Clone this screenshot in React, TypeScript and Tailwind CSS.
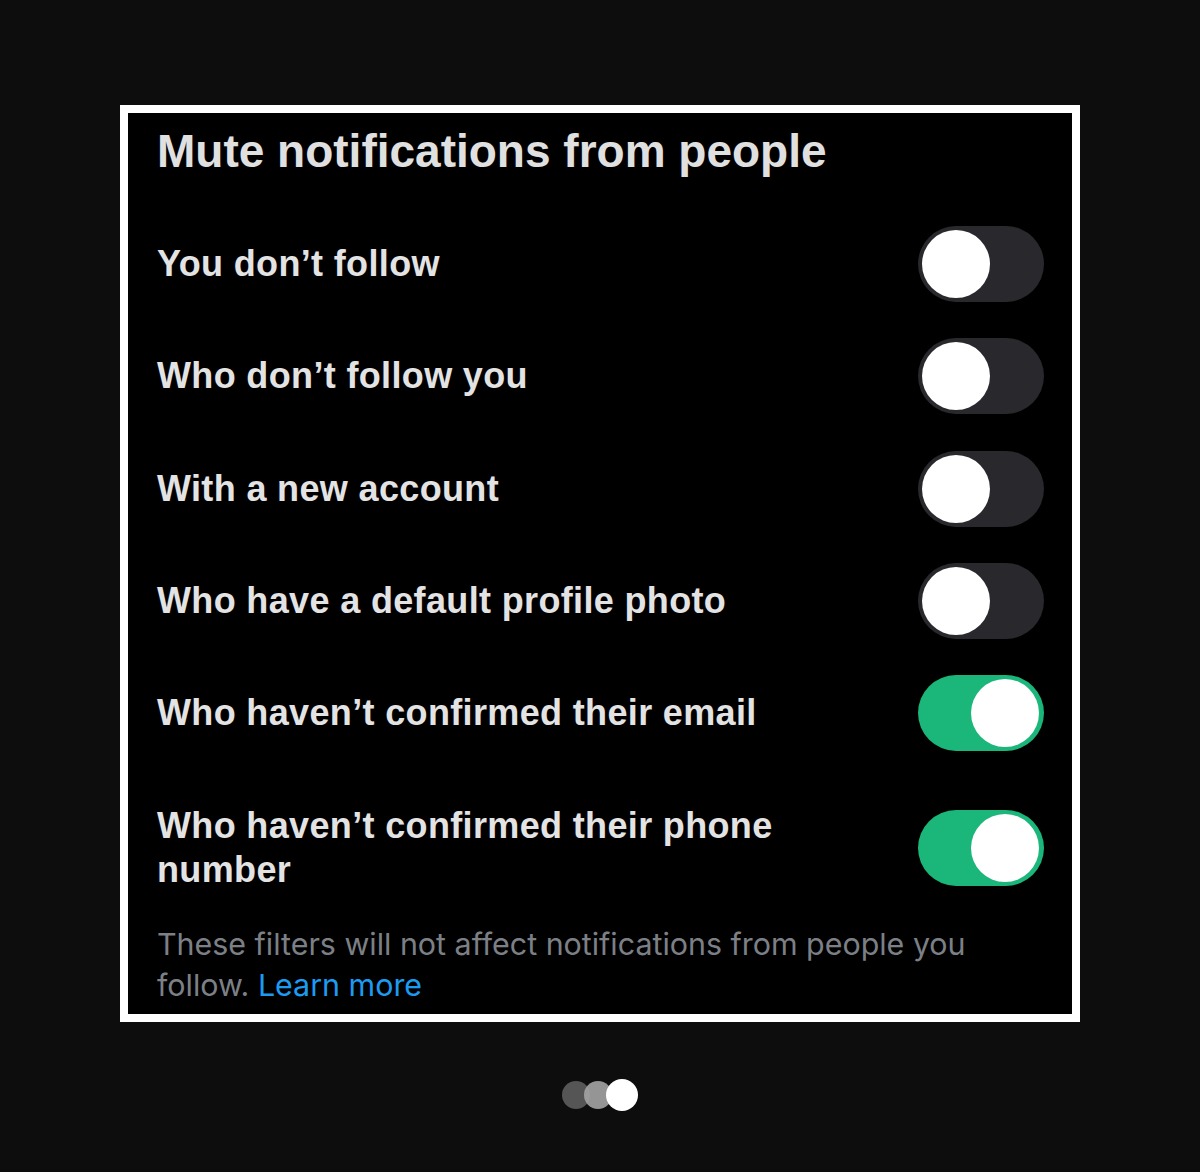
import React from 'react';

const Toggle = ({ on }: { on: boolean }) => (
  <div
    className={
      on
        ? 'flex h-[76px] w-[126px] shrink-0 items-center justify-end rounded-full bg-[#1ab67a] px-[5px]'
        : 'flex h-[76px] w-[126px] shrink-0 items-center justify-start rounded-full bg-[#29292d] px-[4px]'
    }
  >
    <div className="h-[68px] w-[68px] rounded-full bg-white" />
  </div>
);

const FilterRow = ({ label, on }: { label: string; on: boolean }) => (
  <div className="flex items-center justify-between">
    <span className="text-[36px] font-bold leading-[44px] tracking-[0.35px] text-[#e3e3e3]">
      {label}
    </span>
    <Toggle on={on} />
  </div>
);

export default function App() {
  return (
    <div
      className="flex min-h-[1172px] w-full flex-col items-center bg-[#0d0d0d] pt-[105px]"
      style={{ fontFamily: '"Liberation Sans", Arial, sans-serif' }}
    >
      <div className="w-[960px] border-[8px] border-white bg-black">
        <div className="pl-[29px] pr-[28px] pt-[12px] pb-[8px]">
          <h1 className="text-[46px] font-bold leading-[52px] text-[#e0e0e0]">
            Mute notifications from people
          </h1>
          <div className="mt-[49px] flex flex-col gap-[36.25px]">
            <FilterRow label="You don’t follow" on={false} />
            <FilterRow label="Who don’t follow you" on={false} />
            <FilterRow label="With a new account" on={false} />
            <FilterRow label="Who have a default profile photo" on={false} />
            <FilterRow label="Who haven’t confirmed their email" on={true} />
          </div>
          <div className="mt-[53px] flex items-center justify-between">
            <span className="w-[660px] text-[36px] font-bold leading-[44px] tracking-[0.35px] text-[#e3e3e3]">
              Who haven’t confirmed their phone number
            </span>
            <Toggle on={true} />
          </div>
          <p
            className="mt-[32px] text-[30.4px] leading-[41px] text-[#7c8086]"
            style={{ fontFamily: 'Inter, "Liberation Sans", sans-serif' }}
          >
            These filters will not affect notifications from people you
            follow. <span className="text-[#1d9bf0]">Learn more</span>
          </p>
        </div>
      </div>
      <div className="mt-[57px] flex items-center">
        <div className="h-[28px] w-[28px] rounded-full bg-[#555555]" />
        <div className="-ml-[6px] h-[28px] w-[28px] rounded-full bg-[#a4a4a4]/90" />
        <div className="-ml-[6px] h-[32px] w-[32px] rounded-full bg-white" />
      </div>
    </div>
  );
}
